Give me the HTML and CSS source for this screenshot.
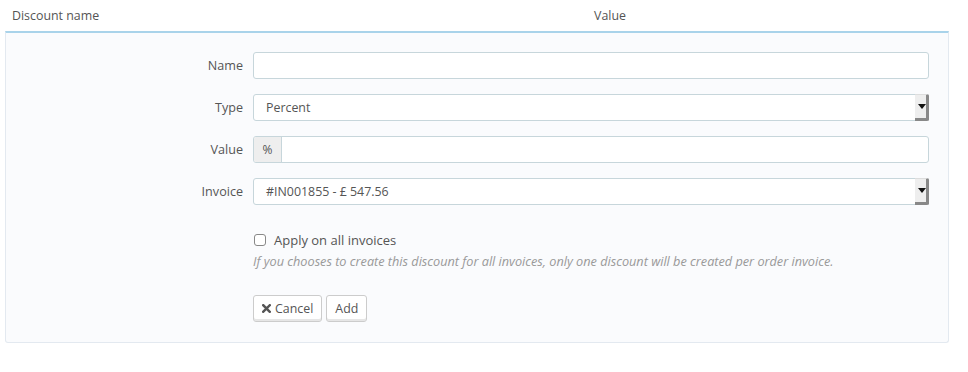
FILE: index.html
```html
<!DOCTYPE html>
<html>
<head>
<meta charset="utf-8">
<link rel="stylesheet" href="styles.css">
</head>
<body>
<div class="thead">
  <div class="th th-name">Discount name</div>
  <div class="th th-value">Value</div>
</div>
<div class="panel">
  <div class="row">
    <label class="lbl">Name</label>
    <div class="ctrl"><div class="input"></div></div>
  </div>
  <div class="row">
    <label class="lbl">Type</label>
    <div class="ctrl"><div class="input select"><span class="sel-text">Percent</span><span class="sel-btn"><span class="caret"></span></span></div></div>
  </div>
  <div class="row">
    <label class="lbl">Value</label>
    <div class="ctrl"><div class="input group"><span class="addon">%</span><span class="grow"></span></div></div>
  </div>
  <div class="row">
    <label class="lbl">Invoice</label>
    <div class="ctrl"><div class="input select"><span class="sel-text">#IN001855 - £ 547.56</span><span class="sel-btn"><span class="caret"></span></span></div></div>
  </div>
  <div class="row row-check">
    <div class="lbl"></div>
    <div class="ctrl">
      <div class="check"><span class="box"></span><span class="check-text">Apply on all invoices</span></div>
      <p class="help">If you chooses to create this discount for all invoices, only one discount will be created per order invoice.</p>
    </div>
  </div>
  <div class="row row-btns">
    <div class="lbl"></div>
    <div class="ctrl btns">
      <button class="btn"><svg class="x" width="9" height="9" viewBox="0 0 9 9"><path d="M1.2 1.2 L7.8 7.8 M7.8 1.2 L1.2 7.8" stroke="#555" stroke-width="2.4" stroke-linecap="square"/></svg>Cancel</button>
      <button class="btn">Add</button>
    </div>
  </div>
</div>
</body>
</html>
```

FILE: styles.css
```css
* { box-sizing: border-box; }
body {
  margin: 0;
  background: #fff;
  font-family: "Open Sans", "Liberation Sans", sans-serif;
  font-size: 12.4px;
  color: #555;
}
.thead {
  display: flex;
  height: 31px;
  align-items: center;
}
.th { padding-left: 12px; color: #555; }
.th-name { width: 582px; }
.panel {
  margin: 0 19px 0 5px;
  background: #fafbfd;
  border: 1px solid #e3e9f0;
  border-top: 2px solid #a9d3ea;
  border-radius: 0 0 3px 3px;
  padding: 19px 19px 19px 0;
  height: 312px;
}
.row {
  display: grid;
  grid-template-columns: 237px 676px;
  column-gap: 10px;
  align-items: center;
  margin-bottom: 15px;
}
.lbl {
  text-align: right;
  color: #555;
  font-size: 12.6px;
}
.input {
  height: 27px;
  background: #fff;
  border: 1px solid #c7d6db;
  border-radius: 3px;
  display: flex;
  align-items: center;
}
.select { padding-left: 12px; }
.sel-text { flex: 1; color: #555; }
.sel-btn {
  width: 14px;
  height: 27px;
  margin-right: -1px;
  align-self: flex-start;
  margin-top: -1px;
  background: #eeeeee;
  border-right: 3px solid #888;
  border-bottom: 3px solid #888;
  border-top: 1px solid #ddd;
  border-radius: 0 2px 2px 0;
  display: flex;
  align-items: center;
  justify-content: center;
}
.caret {
  width: 0; height: 0;
  border-left: 4px solid transparent;
  border-right: 4px solid transparent;
  border-top: 5px solid #111;
  margin-left: 2px;
}
.group { overflow: hidden; }
.addon {
  width: 28px;
  height: 100%;
  background: #eeeeee;
  border-right: 1px solid #c7d6db;
  display: flex;
  align-items: center;
  justify-content: center;
  color: #555;
  font-size: 12px;
}
.row-check { margin-top: 26px; margin-bottom: 25px; align-items: start; }
.check { display: flex; align-items: center; height: 18px; }
.box {
  width: 12px; height: 12px;
  border: 1px solid #888;
  border-radius: 3px;
  background: #fff;
  margin-left: 1px;
  margin-right: 8px;
}
.check-text { font-size: 13px; color: #555; }
.help {
  margin: 3px 0 0 0;
  font-style: italic;
  color: #999;
  font-size: 12.7px;
}
.btns { display: flex; gap: 4px; }
.btn {
  font-family: "Open Sans", "Liberation Sans", sans-serif;
  font-size: 12.4px;
  color: #555;
  background: #fff;
  border: 1px solid #ccc;
  border-radius: 3px;
  box-shadow: inset 0 -2px 0 #e6e6e6;
  height: 27px;
  padding: 0 8px 1px 8px;
  display: flex;
  align-items: center;
  gap: 4px;
}
.x { display: block; }
```
